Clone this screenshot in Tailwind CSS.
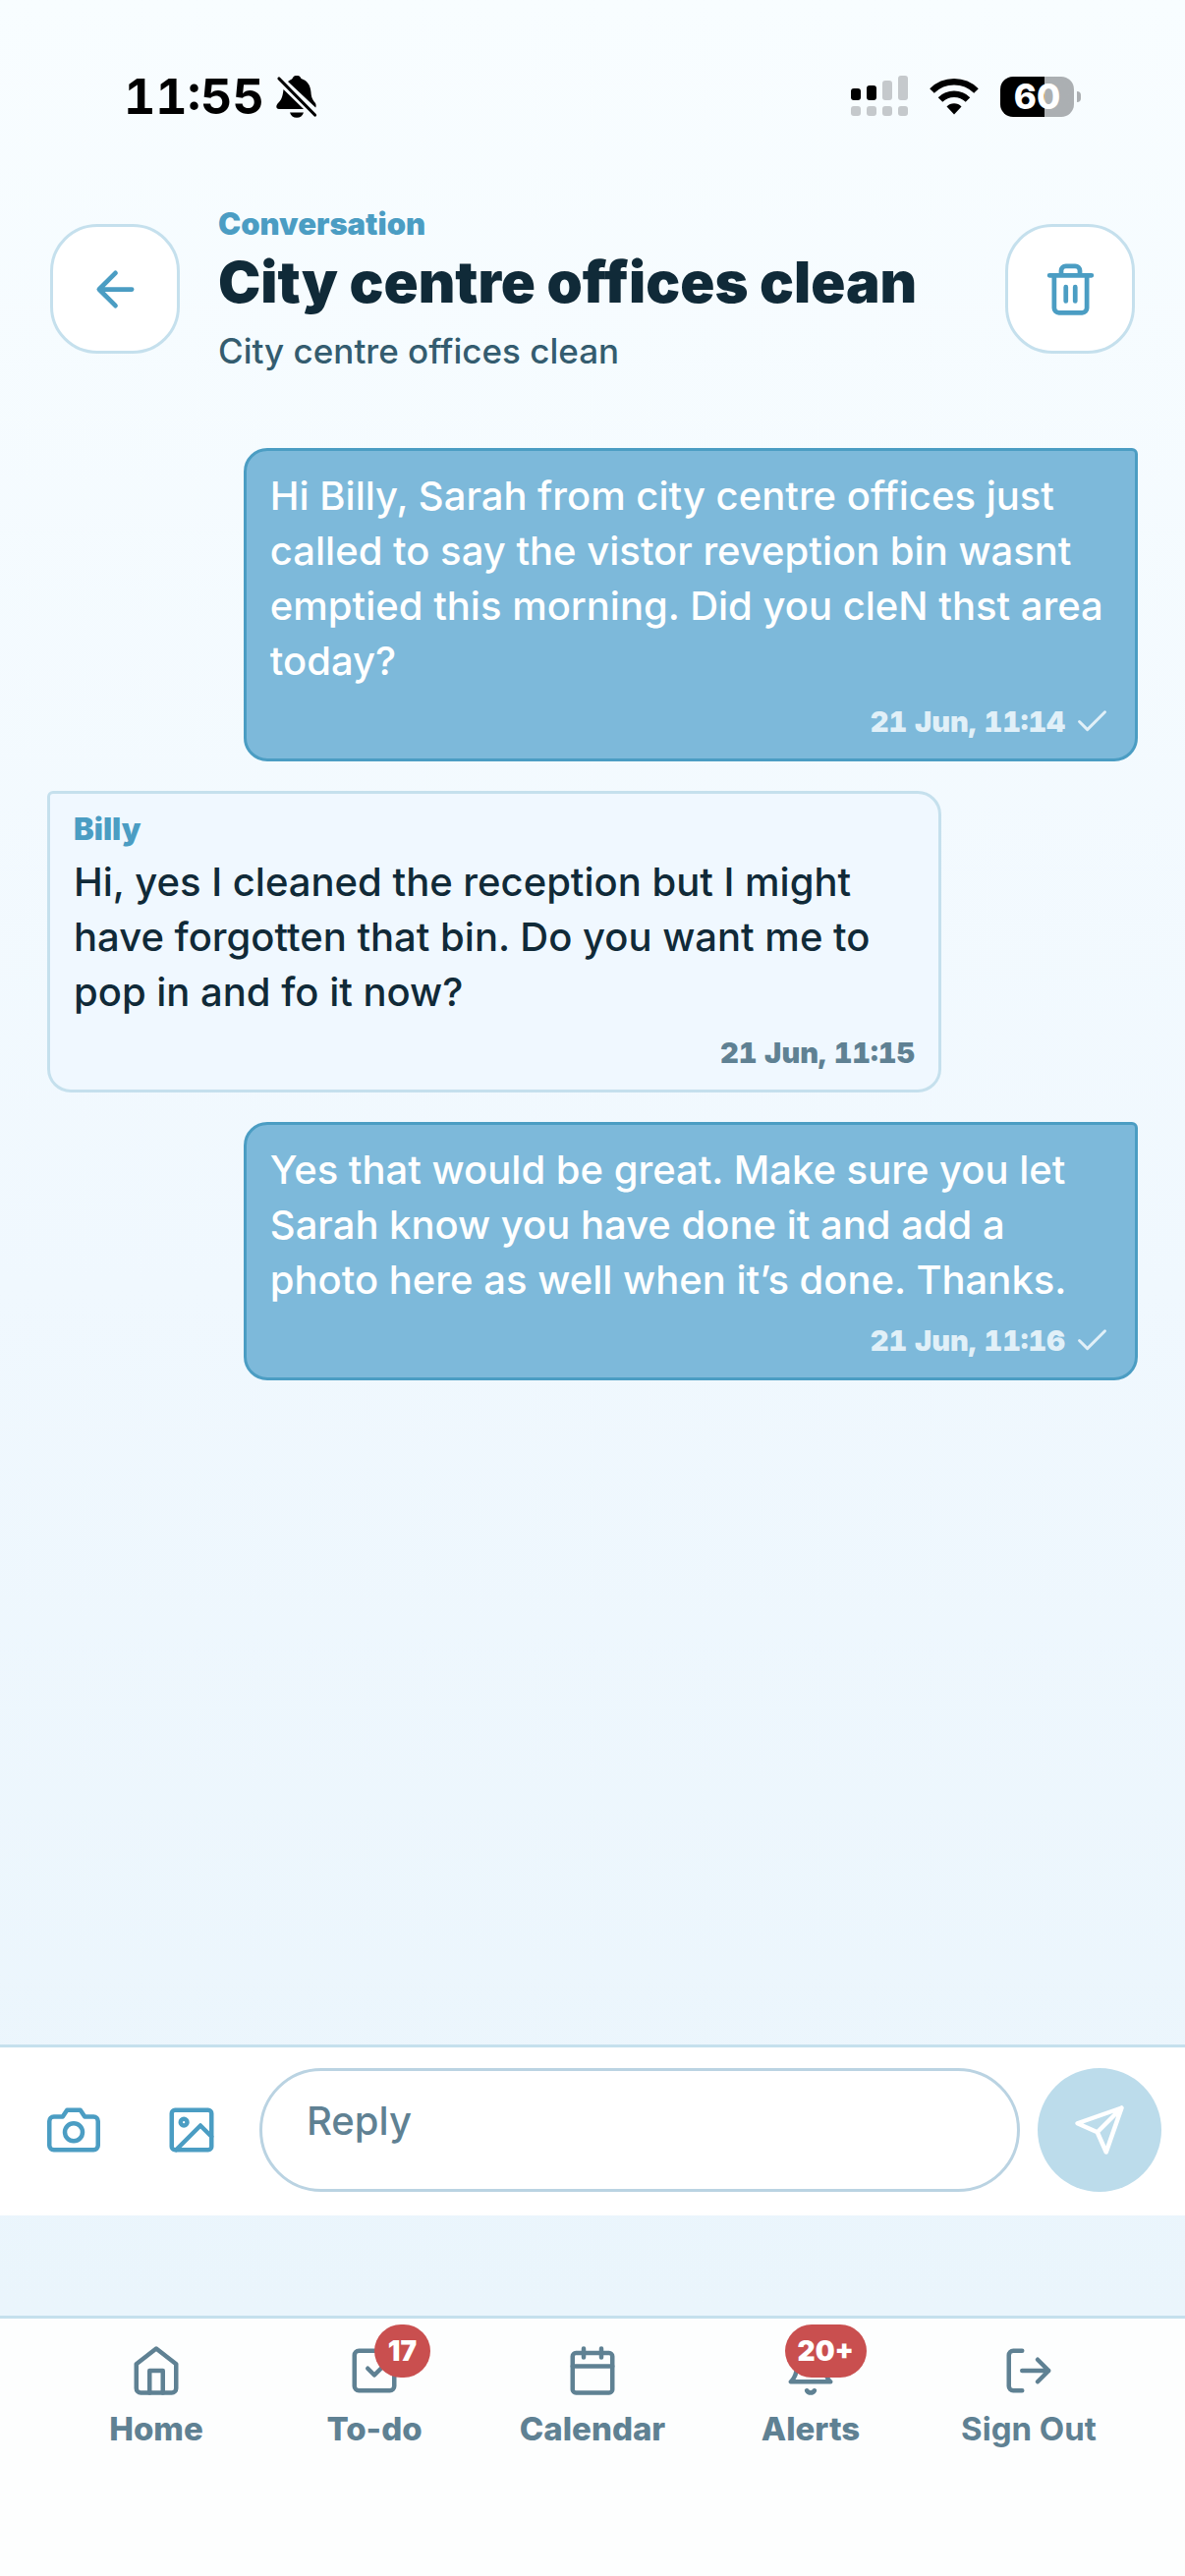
<!DOCTYPE html>
<html lang="en">
<head>
  <meta charset="UTF-8" />
  <meta name="viewport" content="width=device-width, initial-scale=1.0" />
  <title>City centre offices clean</title>
  <script src="https://cdn.jsdelivr.net/npm/@tailwindcss/browser@4"></script>
</head>
<body class="font-['Inter','Liberation_Sans',sans-serif] text-[#102a38]">
  <div class="flex min-h-screen flex-col bg-linear-to-b from-[#f8fdff] via-[#f0f8fe] via-50% to-[#eaf5fc] to-90%">

    <!-- Status bar -->
    <div class="flex items-center justify-between pt-[68px] pr-[106px] pl-[126px] text-black">
      <div class="flex items-center gap-3">
        <span class="text-[50px] leading-[60px] font-bold tabular-nums">11:55</span>
        <svg class="h-[44px] w-[42px]" viewBox="0 0 42 44" fill="currentColor" aria-hidden="true">
          <path d="M12 7c2-1.500 3.500-2 4.500-3C17.500 1.500 19 1 21 1s3.500.5 4.500 3C32 6 35 11 35.500 18c.3 5 1.500 7.500 4.500 11 .8 1.500.8 3 .2 4.500z" />
          <path d="M7.500 15 28 35H3c-3 0-3.500-3-1.500-5.500C5 26 6.500 24 7.500 15z" />
          <path d="M14 38.500h14c-1 3.500-3.500 5.200-7 5.200s-6-1.700-7-5.200z" />
          <path d="M3 4 39.500 41" fill="none" stroke="currentColor" stroke-width="3.200" stroke-linecap="round" />
        </svg>
      </div>
      <div class="flex items-center gap-[22px]">
        <svg class="h-[42px] w-[58px]" viewBox="0 0 58 42" fill="#c5c9cc" aria-hidden="true">
          <rect x="0" y="13" width="10" height="12" rx="3" fill="#000" />
          <rect x="16" y="10" width="10" height="15" rx="3" fill="#000" />
          <rect x="32" y="5" width="10" height="20" rx="3" />
          <rect x="48" y="0" width="10" height="25" rx="3" />
          <rect x="0" y="31" width="10" height="10" rx="3" />
          <rect x="16" y="31" width="10" height="10" rx="3" />
          <rect x="32" y="31" width="10" height="10" rx="3" />
          <rect x="48" y="31" width="10" height="10" rx="3" />
        </svg>
        <svg class="h-[38px] w-[50px]" viewBox="0 0 50 38" aria-hidden="true">
          <path d="M2.500 13.500A32 32 0 0 1 47.500 13.500" fill="none" stroke="#000" stroke-width="6.500" />
          <path d="M11 22.500A20 20 0 0 1 39 22.500" fill="none" stroke="#000" stroke-width="6.500" />
          <path d="M17.500 29.500a10.500 10.500 0 0 1 15 0L25 37.500z" />
        </svg>
        <div class="flex items-center gap-[3px]">
          <div class="flex h-[41px] w-[75px] items-center justify-center rounded-[13px] bg-linear-to-r from-black from-60% to-[#abafb2] to-60% text-[35px] leading-none font-extrabold text-white">60</div>
          <div class="h-[11px] w-[4px] rounded-r-full bg-[#abafb2]"></div>
        </div>
      </div>
    </div>

    <!-- Header -->
    <header class="flex items-center gap-[39px] px-[51px] pt-[80px]">
      <button type="button" aria-label="Back" class="flex size-[132px] shrink-0 items-center justify-center rounded-[48px] border-3 border-[#c5e0ed] bg-white text-[#4b9dc3]">
        <svg class="size-[57px]" viewBox="0 0 24 24" fill="none" stroke="currentColor" stroke-width="2" stroke-linecap="round" stroke-linejoin="round"><path d="M19 12H5M12 19l-7-7 7-7" /></svg>
      </button>
      <div class="min-w-0 flex-1">
        <p class="text-[31px] leading-[40px] font-black text-[#4b9dc3]">Conversation</p>
        <h1 class="text-[58px] leading-[78px] font-black whitespace-nowrap">City centre offices clean</h1>
        <p class="mt-2 text-[35px] leading-[46px] font-medium text-[#345c6f]">City centre offices clean</p>
      </div>
      <button type="button" aria-label="Delete conversation" class="flex size-[132px] shrink-0 items-center justify-center rounded-[48px] border-3 border-[#c5e0ed] bg-white text-[#4b9dc3]">
        <svg class="size-[57px]" viewBox="0 0 24 24" fill="none" stroke="currentColor" stroke-width="2" stroke-linecap="round" stroke-linejoin="round"><path d="M3 6h18M19 6v14a2 2 0 0 1-2 2H7a2 2 0 0 1-2-2V6m3 0V4a2 2 0 0 1 2-2h4a2 2 0 0 1 2 2v2M10 11v6M14 11v6" /></svg>
      </button>
    </header>

    <!-- Messages -->
    <main class="flex flex-1 flex-col gap-[30px] px-12 pt-[76px] text-[40px] leading-[56px] font-medium">
      <article class="w-[82%] self-end rounded-3xl rounded-tr-md border-3 border-[#4b9dc3] bg-[#7db9da] px-6 py-[18px] text-white">
        <p>Hi Billy, Sarah from city centre offices just called to say the vistor reveption bin wasnt emptied this morning. Did you cleN thst area today?</p>
        <div class="mt-[14px] flex items-center justify-end gap-2 text-[#e1f0f8]">
          <time class="text-[29px] leading-[39px] font-black tabular-nums">21 Jun, 11:14</time>
          <svg class="size-[39px]" viewBox="0 0 24 24" fill="none" stroke="currentColor" stroke-width="1.800" stroke-linecap="round" stroke-linejoin="round"><path d="M20 6 9 17l-5-5" /></svg>
        </div>
      </article>

      <article class="w-[82%] self-start rounded-3xl rounded-tl-md border-3 border-[#c5e0ed] bg-[#f0f8ff] px-6 py-[18px]">
        <p class="mb-2 text-[31px] leading-[36px] font-black text-[#4b9dc3]">Billy</p>
        <p>Hi, yes I cleaned the reception but I might have forgotten that bin. Do you want me to pop in and fo it now?</p>
        <div class="mt-[14px] flex items-center justify-end text-[#5f8193]">
          <time class="text-[29px] leading-[39px] font-black tabular-nums">21 Jun, 11:15</time>
        </div>
      </article>

      <article class="w-[82%] self-end rounded-3xl rounded-tr-md border-3 border-[#4b9dc3] bg-[#7db9da] px-6 py-[18px] text-white">
        <p>Yes that would be great. Make sure you let Sarah know you have done it and add a photo here as well when it’s done. Thanks.</p>
        <div class="mt-[14px] flex items-center justify-end gap-2 text-[#e1f0f8]">
          <time class="text-[29px] leading-[39px] font-black tabular-nums">21 Jun, 11:16</time>
          <svg class="size-[39px]" viewBox="0 0 24 24" fill="none" stroke="currentColor" stroke-width="1.800" stroke-linecap="round" stroke-linejoin="round"><path d="M20 6 9 17l-5-5" /></svg>
        </div>
      </article>
    </main>

    <!-- Composer -->
    <form class="mb-[102px] flex items-center gap-[18px] border-t-3 border-[#c5e0ed] bg-white px-6 pt-[21px] pb-6 text-[#4b9dc3]">
      <button type="button" aria-label="Take photo" class="flex h-[126px] w-[102px] shrink-0 items-center justify-center">
        <svg class="size-[54px]" viewBox="0 0 24 24" fill="none" stroke="currentColor" stroke-width="2" stroke-linecap="round" stroke-linejoin="round"><path d="M23 19a2 2 0 0 1-2 2H3a2 2 0 0 1-2-2V8a2 2 0 0 1 2-2h4l2-3h6l2 3h4a2 2 0 0 1 2 2z" /><circle cx="12" cy="13" r="4" /></svg>
      </button>
      <button type="button" aria-label="Add image" class="flex h-[126px] w-[102px] shrink-0 items-center justify-center">
        <svg class="size-[54px]" viewBox="0 0 24 24" fill="none" stroke="currentColor" stroke-width="2" stroke-linecap="round" stroke-linejoin="round"><rect x="3" y="3" width="18" height="18" rx="1.500" /><circle cx="8.500" cy="8.500" r="1.500" /><path d="m21 15-5-5L5 21" /></svg>
      </button>
      <textarea aria-label="Reply" placeholder="Reply" rows="1" class="h-[126px] min-w-0 flex-1 resize-none overflow-hidden rounded-[63px] border-3 border-[#bad3e2] bg-white px-[45px] pt-[23px] text-[40px] leading-[56px] font-medium text-[#102a38] placeholder:text-[#5f8193]"></textarea>
      <button type="submit" aria-label="Send" class="flex size-[126px] shrink-0 items-center justify-center rounded-full bg-[#bcdceb] text-white">
        <svg class="size-[54px]" viewBox="0 0 24 24" fill="none" stroke="currentColor" stroke-width="2" stroke-linecap="round" stroke-linejoin="round"><path d="M22 2 11 13M22 2l-7 20-4-9-9-4 20-7z" /></svg>
      </button>
    </form>

    <!-- Bottom navigation -->
    <nav class="grid grid-cols-5 border-t-3 border-[#c5e0ed] bg-[#fdfefe] px-12 pt-[26px] pb-[130px] text-[33px] leading-[40px] font-extrabold text-[#5f8193]">
      <a href="#" class="flex flex-col items-center gap-3">
        <svg class="size-[54px]" viewBox="0 0 24 24" fill="none" stroke="currentColor" stroke-width="2" stroke-linecap="round" stroke-linejoin="round"><path d="m3 9 9-7 9 7v11a2 2 0 0 1-2 2H5a2 2 0 0 1-2-2z" /><path d="M9 22V12h6v10" /></svg>
        <span>Home</span>
      </a>
      <a href="#" class="flex flex-col items-center gap-3">
        <span class="relative">
          <svg class="size-[54px]" viewBox="0 0 24 24" fill="none" stroke="currentColor" stroke-width="2" stroke-linecap="round" stroke-linejoin="round"><path d="m9 11 3 3L22 4" /><path d="M21 12v7a2 2 0 0 1-2 2H5a2 2 0 0 1-2-2V5a2 2 0 0 1 2-2h11" /></svg>
          <span class="absolute -top-5 -right-[30px] flex h-[54px] min-w-[57px] items-center justify-center rounded-full bg-[#c94f4f] px-[13px] text-[28px] leading-none font-black text-white">17</span>
        </span>
        <span>To-do</span>
      </a>
      <a href="#" class="flex flex-col items-center gap-3">
        <svg class="size-[54px]" viewBox="0 0 24 24" fill="none" stroke="currentColor" stroke-width="2" stroke-linecap="round" stroke-linejoin="round"><rect x="3" y="4" width="18" height="18" rx="1.500" /><path d="M16 2v4M8 2v4M3 10h18" /></svg>
        <span>Calendar</span>
      </a>
      <a href="#" class="flex flex-col items-center gap-3">
        <span class="relative">
          <svg class="size-[54px]" viewBox="0 0 24 24" fill="none" stroke="currentColor" stroke-width="2" stroke-linecap="round" stroke-linejoin="round"><path d="M18 8A6 6 0 0 0 6 8c0 7-3 9-3 9h18s-3-2-3-9" /><path d="M13.730 21a2 2 0 0 1-3.460 0" /></svg>
          <span class="absolute -top-5 -right-[30px] flex h-[54px] min-w-[57px] items-center justify-center rounded-full bg-[#c94f4f] px-[13px] text-[28px] leading-none font-black text-white">20+</span>
        </span>
        <span>Alerts</span>
      </a>
      <a href="#" class="flex flex-col items-center gap-3">
        <svg class="size-[54px]" viewBox="0 0 24 24" fill="none" stroke="currentColor" stroke-width="2" stroke-linecap="round" stroke-linejoin="round"><path d="M9 21H5a2 2 0 0 1-2-2V5a2 2 0 0 1 2-2h4M16 17l5-5-5-5M21 12H9" /></svg>
        <span class="font-bold">Sign Out</span>
      </a>
    </nav>
  </div>
</body>
</html>
